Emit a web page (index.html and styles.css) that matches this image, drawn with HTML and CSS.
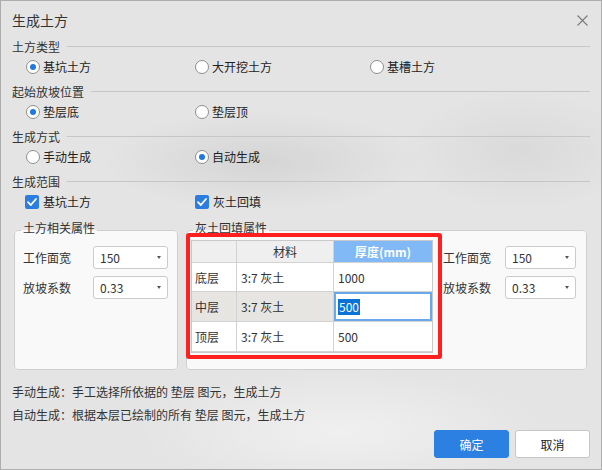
FILE: index.html
```html
<!DOCTYPE html>
<html lang="zh-CN">
<head>
<meta charset="utf-8">
<title>生成土方</title>
<link rel="stylesheet" href="styles.css">
</head>
<body>
<div class="dialog">
  <div class="titlebar">
    <span class="title">生成土方</span>
    <svg class="close" width="11" height="11" viewBox="0 0 11 11"><path d="M0.5 0.5 L10.5 10.5 M10.5 0.5 L0.5 10.5" stroke="#7a7a7a" stroke-width="1.1" fill="none"/></svg>
  </div>

  <div class="sections">
    <div class="section">
      <div class="heading"><span>土方类型</span><i class="rule"></i></div>
      <div class="options">
        <label class="opt"><span class="radio on"></span>基坑土方</label>
        <label class="opt"><span class="radio"></span>大开挖土方</label>
        <label class="opt"><span class="radio"></span>基槽土方</label>
      </div>
    </div>
    <div class="section">
      <div class="heading"><span>起始放坡位置</span><i class="rule"></i></div>
      <div class="options">
        <label class="opt"><span class="radio on"></span>垫层底</label>
        <label class="opt"><span class="radio"></span>垫层顶</label>
      </div>
    </div>
    <div class="section">
      <div class="heading"><span>生成方式</span><i class="rule"></i></div>
      <div class="options">
        <label class="opt"><span class="radio"></span>手动生成</label>
        <label class="opt"><span class="radio on"></span>自动生成</label>
      </div>
    </div>
    <div class="section">
      <div class="heading"><span>生成范围</span><i class="rule"></i></div>
      <div class="options checks">
        <label class="opt"><span class="check"><svg width="14" height="14" viewBox="0 0 14 14"><path d="M3 7.2 L5.8 10 L11 4" stroke="#fff" stroke-width="1.8" fill="none" stroke-linecap="round" stroke-linejoin="round"/></svg></span>基坑土方</label>
        <label class="opt"><span class="check"><svg width="14" height="14" viewBox="0 0 14 14"><path d="M3 7.2 L5.8 10 L11 4" stroke="#fff" stroke-width="1.8" fill="none" stroke-linecap="round" stroke-linejoin="round"/></svg></span>灰土回填</label>
      </div>
    </div>
  </div>

  <div class="groups">
    <fieldset class="group left">
      <legend>土方相关属性</legend>
      <div class="group-body left-body">
        <div class="form">
          <div class="frow"><span class="flabel">工作面宽</span><div class="select">150<i class="arrow"></i></div></div>
          <div class="frow"><span class="flabel">放坡系数</span><div class="select">0.33<i class="arrow"></i></div></div>
        </div>
      </div>
    </fieldset>
    <fieldset class="group right">
      <legend>灰土回填属性</legend>
      <div class="group-body right-body">
        <div class="table-wrap">
          <div class="grid">
            <div class="c hd"></div>
            <div class="c hd center">材料</div>
            <div class="c hd center sel last">厚度(mm)</div>
            <div class="c">底层</div>
            <div class="c pad">3:7 灰土</div>
            <div class="c pad last">1000</div>
            <div class="c grey">中层</div>
            <div class="c grey pad">3:7 灰土</div>
            <div class="c edit last"><span class="hl">500</span></div>
            <div class="c">顶层</div>
            <div class="c pad">3:7 灰土</div>
            <div class="c pad last">500</div>
          </div>
          <div class="mark"></div>
        </div>
        <div class="form rform">
          <div class="frow"><span class="flabel r">工作面宽</span><div class="select r">150<i class="arrow"></i></div></div>
          <div class="frow"><span class="flabel r">放坡系数</span><div class="select r">0.33<i class="arrow"></i></div></div>
        </div>
      </div>
    </fieldset>
  </div>

  <div class="notes">
    <p>手动生成：手工选择所依据的 垫层 图元，生成土方</p>
    <p>自动生成：根据本层已绘制的所有 垫层 图元，生成土方</p>
  </div>

  <div class="buttons">
    <button class="btn primary">确定</button>
    <button class="btn">取消</button>
  </div>
</div>
</body>
</html>
```

FILE: styles.css
```css
* { box-sizing: border-box; }
html, body { margin: 0; padding: 0; }
body {
  font-family: "Noto Sans CJK SC", "Microsoft YaHei", sans-serif;
  font-size: 12px;
  color: #333;
  background: #e5e5e5;
}
.dialog {
  width: 602px;
  height: 470px;
  border: 1px solid #adadad;
  background:
    radial-gradient(ellipse 160px 50px at 260px 160px, rgba(200,200,200,0.55), rgba(200,200,200,0)),
    radial-gradient(ellipse 120px 60px at 520px 150px, rgba(205,205,205,0.45), rgba(205,205,205,0)),
    radial-gradient(ellipse 200px 60px at 340px 430px, rgba(245,245,245,0.7), rgba(245,245,245,0)),
    radial-gradient(ellipse 120px 80px at 560px 20px, rgba(228,228,228,0.5), rgba(228,228,228,0)),
    #e4e4e4;
  display: flex;
  flex-direction: column;
}
.titlebar {
  height: 36px;
  display: flex;
  justify-content: space-between;
  align-items: flex-start;
  padding: 10px 13px 0 11px;
}
.title { font-size: 14px; line-height: 18px; color: #333; }
.close { margin-top: 4px; }

.sections { padding: 0 11px; }
.section { margin-bottom: 6px; }
.heading {
  height: 20px;
  display: flex;
  align-items: center;
  line-height: 20px;
}
.heading .rule {
  flex: 1;
  height: 0;
  border-top: 1px solid #c6c6c6;
  margin-left: 7px;
  margin-top: -1px;
}
.options {
  height: 19px;
  display: grid;
  grid-template-columns: 169px 175px 1fr;
  padding-left: 14px;
  align-items: center;
}
.options.checks { padding-left: 13px; grid-template-columns: 170px 1fr; }
.opt {
  display: flex;
  align-items: center;
  line-height: 19px;
  color: #222;
}
.radio {
  width: 14px;
  height: 14px;
  border-radius: 50%;
  border: 1px solid #8e8e8e;
  background: #fff;
  margin-right: 3px;
  position: relative;
}
.radio.on::after {
  content: "";
  position: absolute;
  left: 3px; top: 3px;
  width: 6px; height: 6px;
  border-radius: 50%;
  background: #1f78e0;
}
.check {
  width: 14px;
  height: 14px;
  border-radius: 2px;
  background: #2b7ee0;
  margin-right: 4px;
  display: flex;
}

.groups {
  display: flex;
  gap: 8px;
  padding-left: 13px;
  margin-top: 3px;
}
.group {
  margin: 0;
  padding: 0;
  border: 1px solid #cfcfcf;
  border-radius: 4px;
  background: #f9f9f9;
  min-width: 0;
}
.group legend {
  margin-left: 6px;
  padding: 0 2px 4px;
  line-height: 16px;
  color: #333;
}
.group.left { width: 164px; }
.group.right { width: 401px; }
.group-body { height: 129px; }
.left-body { padding: 6px 0 0 8px; }
.right-body {
  display: flex;
  padding-left: 4px;
}
.form { display: flex; flex-direction: column; gap: 7px; }
.frow { display: flex; align-items: center; height: 23px; }
.flabel { width: 70px; color: #333; }
.flabel.r { width: 62px; }
.select {
  width: 75px;
  height: 23px;
  border: 1px solid #cbcbcb;
  border-radius: 3px;
  background: #fff;
  line-height: 21px;
  padding-left: 6px;
  color: #333;
  position: relative;
}
.select.r { width: 71px; }
.arrow {
  position: absolute;
  right: 6px;
  top: 9px;
  width: 0; height: 0;
  border-left: 2.5px solid transparent;
  border-right: 2.5px solid transparent;
  border-top: 3px solid #555;
}
.rform { margin-left: 10px; margin-top: 6px; }

.table-wrap {
  width: 242px;
  height: 113px;
  border: 1px solid #c9c9c9;
  background: #fff;
  position: relative;
}
.grid {
  display: grid;
  grid-template-columns: 45px 97px 98px;
  grid-template-rows: 22px 29px 30px 30px;
}
.c {
  border-right: 1px solid #d2d2d2;
  border-bottom: 1px solid #d2d2d2;
  display: flex;
  align-items: center;
  padding-left: 3px;
  color: #333;
  white-space: nowrap;
}
.c.last { border-right: 0; }
.c.pad { padding-left: 4px; }
.c.hd { background: #efefef; }
.c.center { justify-content: center; padding-left: 0; }
.c.sel { background: #80b9f5; color: #fff; font-weight: 600; }
.c.grey { background: #e7e5e2; }
.c.edit {
  box-shadow: inset 0 0 0 2px #6aa8ec;
  padding-left: 4px;
}
.hl {
  background: #0a74d6;
  color: #fff;
  line-height: 16px;
  padding: 0 1px;
}
.mark {
  position: absolute;
  left: -6px;
  top: -8px;
  width: 256px;
  height: 126px;
  border: 4px solid #ff1f1f;
  border-radius: 3px;
}

.notes { padding-left: 11px; margin-top: 10px; }
.notes p { margin: 0; line-height: 23px; color: #333; }

.buttons {
  display: flex;
  justify-content: flex-end;
  gap: 6px;
  padding-right: 11px;
  margin-top: 4px;
}
.btn {
  width: 75px;
  height: 28px;
  border: 1px solid #c6c6c6;
  border-radius: 3px;
  background: #fff;
  font-family: inherit;
  font-size: 12px;
  color: #222;
  padding: 0;
}
.btn.primary {
  background: #2b80e2;
  border-color: #2b80e2;
  color: #fff;
}
```
